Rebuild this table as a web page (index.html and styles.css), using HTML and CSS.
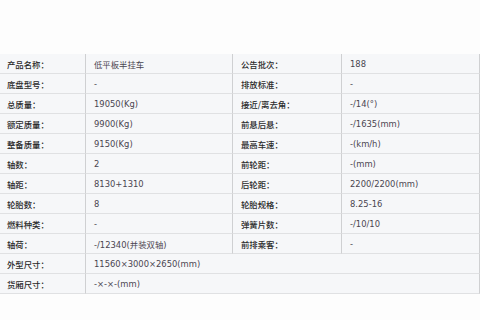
FILE: index.html
```html
<!DOCTYPE html>
<html lang="zh">
<head>
<meta charset="utf-8">
<title>参数</title>
<link rel="stylesheet" href="styles.css">
</head>
<body>
<div class="page">
  <table class="spec">
    <colgroup>
      <col class="c1"><col class="c2"><col class="c3"><col class="c4">
    </colgroup>
    <tbody>
      <tr><td class="lbl">产品名称：</td><td class="val">低平板半挂车</td><td class="lbl">公告批次：</td><td class="val">188</td></tr>
      <tr><td class="lbl">底盘型号：</td><td class="val">-</td><td class="lbl">排放标准：</td><td class="val">-</td></tr>
      <tr><td class="lbl">总质量：</td><td class="val">19050(Kg)</td><td class="lbl">接近/离去角：</td><td class="val">-/14(°)</td></tr>
      <tr><td class="lbl">额定质量：</td><td class="val">9900(Kg)</td><td class="lbl">前悬后悬：</td><td class="val">-/1635(mm)</td></tr>
      <tr><td class="lbl">整备质量：</td><td class="val">9150(Kg)</td><td class="lbl">最高车速：</td><td class="val">-(km/h)</td></tr>
      <tr><td class="lbl">轴数：</td><td class="val">2</td><td class="lbl">前轮距：</td><td class="val">-(mm)</td></tr>
      <tr><td class="lbl">轴距：</td><td class="val">8130+1310</td><td class="lbl">后轮距：</td><td class="val">2200/2200(mm)</td></tr>
      <tr><td class="lbl">轮胎数：</td><td class="val">8</td><td class="lbl">轮胎规格：</td><td class="val">8.25-16</td></tr>
      <tr><td class="lbl">燃料种类：</td><td class="val">-</td><td class="lbl">弹簧片数：</td><td class="val">-/10/10</td></tr>
      <tr><td class="lbl">轴荷：</td><td class="val">-/12340(并装双轴)</td><td class="lbl">前排乘客：</td><td class="val">-</td></tr>
      <tr><td class="lbl">外型尺寸：</td><td class="val" colspan="3">11560×3000×2650(mm)</td></tr>
      <tr><td class="lbl">货厢尺寸：</td><td class="val" colspan="3">-×-×-(mm)</td></tr>
    </tbody>
  </table>
</div>
</body>
</html>
```
FILE: styles.css
```css
html, body {
  margin: 0;
  padding: 0;
  background: #fdfdfd;
}
.page {
  padding-top: 54px;
  width: 480px;
}
.spec {
  width: 480px;
  table-layout: fixed;
  border-collapse: separate;
  border-spacing: 0;
  font-family: "DejaVu Sans", Verdana, "Noto Sans CJK SC", sans-serif;
  font-size: 8.4px;
}
.c1 { width: 86px; }
.c2 { width: 147px; }
.c3 { width: 109px; }
.c4 { width: 138px; }
.spec td {
  height: 19px;
  padding: 0 0 0 8px;
  background: #f6f7f9;
  border-bottom: 1px solid #e0e1e3;
  border-right: 1px solid #cfd0d2;
  vertical-align: middle;
  white-space: nowrap;
  overflow: hidden;
}
.spec td:first-child {
  padding-left: 7px;
}
.lbl {
  color: #2a2a2a;
  font-family: "Noto Sans CJK SC", sans-serif;
  font-weight: 500;
}
.val {
  color: #4a4550;
}
```
